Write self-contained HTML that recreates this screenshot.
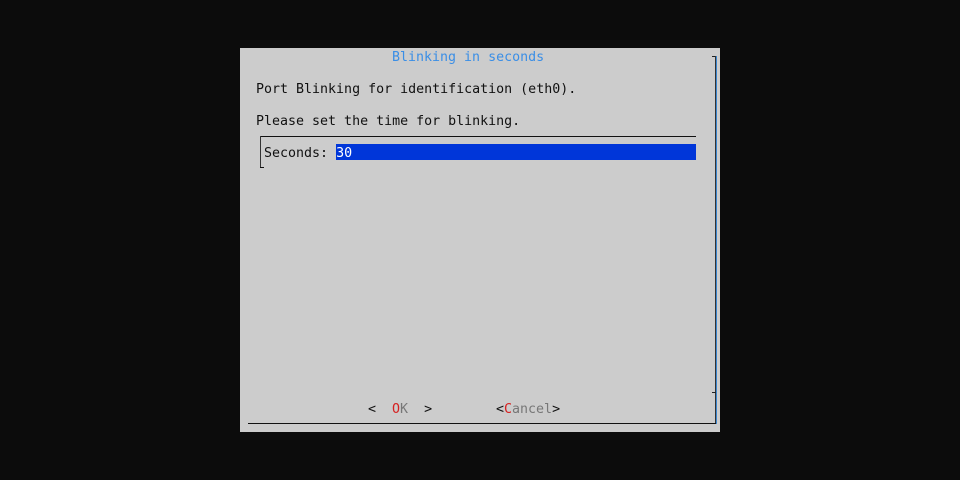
<!DOCTYPE html>
<html><head><style>
body{margin:0;width:960px;height:480px;background:#0c0c0c;position:relative;overflow:hidden;font-family:"DejaVu Sans Mono","Liberation Mono",monospace;font-size:13.3px;}
.d{position:absolute;left:240px;top:48px;width:480px;height:384px;background:#cccccc;}
.t{position:absolute;white-space:pre;line-height:16px;color:#111;margin-top:2px;}
.a{position:absolute;}
</style></head><body>
<div class="d"></div>
<div class="t" style="left:392px;top:48px;color:#3a8ee6">Blinking in seconds</div>
<div class="t" style="left:256px;top:80px">Port Blinking for identification (eth0).</div>
<div class="t" style="left:256px;top:112px">Please set the time for blinking.</div>
<div class="a" style="left:260px;top:136px;width:436px;height:1px;background:#111"></div>
<div class="a" style="left:260px;top:136px;width:1px;height:32px;background:#333"></div>
<div class="a" style="left:260px;top:167px;width:4px;height:1px;background:#111"></div>
<div class="a" style="left:336px;top:144px;width:360px;height:16px;background:#0036d9"></div>
<div class="t" style="left:264px;top:144px">Seconds: <span style="color:#fff">30</span></div>
<div class="a" style="left:712px;top:56px;width:4px;height:1px;background:#222"></div>
<div class="a" style="left:715px;top:56px;width:1px;height:368px;background:#333"></div>
<div class="a" style="left:716px;top:56px;width:1px;height:368px;background:#3a86d0"></div>
<div class="a" style="left:712px;top:392px;width:4px;height:1px;background:#222"></div>
<div class="a" style="left:248px;top:423px;width:468px;height:1px;background:#111"></div>
<div class="t" style="left:368px;top:400px">&lt;  <span style="color:#d62020">O</span><span style="color:#777">K</span>  &gt;</div>
<div class="t" style="left:496px;top:400px">&lt;<span style="color:#d62020">C</span><span style="color:#777">ancel</span>&gt;</div>
</body></html>
